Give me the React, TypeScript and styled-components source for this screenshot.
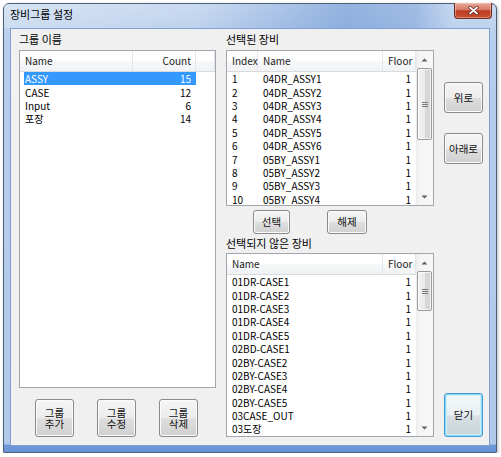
import React from 'react'
import styled, { createGlobalStyle } from 'styled-components'

const FONT = `"Noto Sans CJK KR", "Liberation Sans", sans-serif`

const GlobalStyle = createGlobalStyle`
  html, body {
    margin: 0;
    padding: 0;
    background: #fff;
  }
  body {
    font-family: ${FONT};
    font-size: 10px;
    color: #000;
  }
`

const Frame = styled.div`
  margin: 3px 0 0 3px;
  width: 494px;
  height: 450px;
  box-sizing: border-box;
  border: 1px solid #4f6079;
  border-radius: 6px 6px 1px 1px;
  padding: 0 6px 6px 6px;
  display: flex;
  flex-direction: column;
  background: linear-gradient(180deg, #c9daf0 0, #b7cdeb 40px, #b1c9e9 calc(100% - 8px), #6f99d8 calc(100% - 7px), #6892d4 100%);
  box-shadow: 1px 1px 3px rgba(0, 0, 0, 0.3);
`

const TitleBar = styled.div`
  height: 24px;
  margin: 0 -2px 0 -6px;
  padding-left: 6px;
  display: flex;
  align-items: flex-start;
  justify-content: space-between;
  background: linear-gradient(98deg, rgba(255, 255, 255, 0.25) 0%, transparent 40%, rgba(70, 120, 200, 0.4) 70%, rgba(70, 120, 200, 0.3) 84%, transparent 92%);
`

const Title = styled.span`
  font-size: 11px;
  line-height: 20px;
  color: #000;
`

const CloseButton = styled.div`
  width: 38px;
  height: 16px;
  margin-top: -1px;
  box-sizing: border-box;
  border: 1px solid #6b2b22;
  border-top: none;
  border-radius: 0 0 4px 4px;
  display: flex;
  align-items: center;
  justify-content: center;
  background: linear-gradient(180deg, #e8a89a 0%, #d67866 45%, #bd3b24 52%, #c8512f 100%);
  box-shadow: inset 0 0 0 1px rgba(255, 210, 200, 0.45);
`

const Client = styled.div`
  flex: 1;
  box-sizing: border-box;
  border: 1px solid #7c9fd4;
  background: #f0f0f0;
  padding: 0 7px 8px 8px;
  display: flex;
  gap: 10px;
`

const Column = styled.div<{ $w: number }>`
  width: ${p => p.$w}px;
  flex: none;
  display: flex;
  flex-direction: column;
`

const Label = styled.div<{ $h: number }>`
  height: ${p => p.$h}px;
  line-height: ${p => p.$h}px;
  font-size: 11px;
  white-space: nowrap;
`

const ListBox = styled.div<{ $h: number }>`
  height: ${p => p.$h}px;
  flex: none;
  box-sizing: border-box;
  border: 1px solid #a3a6ad;
  background: #fff;
  display: flex;
  overflow: hidden;
`

const ListBody = styled.div`
  flex: 1;
  min-width: 0;
  overflow: hidden;
`

const Header = styled.div`
  height: 21px;
  box-sizing: border-box;
  display: flex;
  border-bottom: 1px solid #d8dade;
  background: linear-gradient(180deg, #ffffff 0%, #ffffff 45%, #f6f7f8 55%, #f1f2f4 100%);
`

const HeadCell = styled.div<{ $w?: number; $right?: boolean }>`
  ${p => (p.$w ? `width: ${p.$w}px; flex: none;` : 'flex: 1;')}
  box-sizing: border-box;
  border-right: 1px solid #e2e5ea;
  padding: 0 4px 0 5px;
  line-height: 20px;
  text-align: ${p => (p.$right ? 'right' : 'left')};
  color: #1c1c1c;
  white-space: nowrap;
`

const Row = styled.div<{ $w: number; $sel?: boolean }>`
  width: ${p => p.$w}px;
  height: 13.4px;
  margin-left: 4px;
  display: flex;
  align-items: center;
  background: ${p => (p.$sel ? '#3399ff' : 'transparent')};
  color: ${p => (p.$sel ? '#fff' : '#000')};
`

const Cell = styled.div<{ $w: number; $right?: boolean; $first?: boolean }>`
  width: ${p => p.$w}px;
  flex: none;
  box-sizing: border-box;
  padding: ${p => (p.$first ? '0 0 0 1px' : p.$right ? '0 5px 0 0' : '0 0 0 5px')};
  text-align: ${p => (p.$right ? 'right' : 'left')};
  line-height: 13px;
  white-space: nowrap;
  overflow: hidden;
`

const ScrollBar = styled.div`
  width: 17px;
  flex: none;
  display: flex;
  flex-direction: column;
  background: linear-gradient(90deg, #ebebeb 0, #f4f4f4 3px, #f7f7f7 100%);
`

const ArrowButton = styled.div<{ $bottom?: boolean }>`
  height: 17px;
  flex: none;
  display: flex;
  align-items: center;
  justify-content: center;
  ${p => (p.$bottom ? 'margin-top: auto;' : '')}
`

const Thumb = styled.div<{ $h: number }>`
  height: ${p => p.$h}px;
  margin: 0 1px;
  flex: none;
  box-sizing: border-box;
  border: 1px solid #9b9b9b;
  border-radius: 2px;
  display: flex;
  align-items: center;
  justify-content: center;
  background: linear-gradient(90deg, #f3f3f3 0%, #e9e9e9 50%, #d9d9d9 51%, #d4d4d4 100%);
  box-shadow: inset 0 0 0 1px rgba(255, 255, 255, 0.7);
`

const Grip = styled.div`
  width: 6px;
  height: 5px;
  background: repeating-linear-gradient(180deg, #7a7a7a 0, #7a7a7a 1px, transparent 1px, transparent 2px);
`

const Button = styled.div<{ $w: number; $h: number; $default?: boolean }>`
  width: ${p => p.$w}px;
  height: ${p => p.$h}px;
  flex: none;
  box-sizing: border-box;
  border: 1px solid ${p => (p.$default ? '#3c9ad6' : '#8a8a8a')};
  border-radius: 3px;
  display: flex;
  flex-direction: column;
  align-items: center;
  justify-content: center;
  font-size: 10.5px;
  line-height: 11.5px;
  color: #111;
  background: ${p =>
    p.$default
      ? 'linear-gradient(180deg, #f4f9fc 0%, #e8eef2 50%, #d8e0e5 52%, #c9d3d9 100%)'
      : 'linear-gradient(180deg, #f5f5f5 0%, #ececec 50%, #dedede 52%, #d0d0d0 100%)'};
  box-shadow: ${p => (p.$default ? 'inset 0 0 0 1px #8fdaf8, inset 0 0 0 2px #c8eefc' : 'inset 0 0 0 1px #fbfbfb')};
`

const GroupButtons = styled.div`
  margin-top: 11px;
  padding-left: 16px;
  display: flex;
  gap: 23px;
`

const PickButtons = styled.div`
  margin-top: 4px;
  padding-left: 27px;
  display: flex;
  gap: 37px;
`

const SideButtons = styled.div`
  flex: 1;
  padding-top: 53px;
  display: flex;
  flex-direction: column;
  gap: 20px;
`

const Push = styled.div`
  margin-top: auto;
`

type Col = { label: string; width: number; right?: boolean }

type ListProps = {
  cols: Col[]
  rows: string[][]
  height: number
  selected?: number
  filler?: boolean
  thumb?: number
}

const UpArrow = () => (
  <svg width="7" height="4" viewBox="0 0 7 4">
    <path d="M0.5 3.5 L3.5 0.5 L6.5 3.5 Z" fill="#5f5f5f" />
  </svg>
)

const DownArrow = () => (
  <svg width="7" height="4" viewBox="0 0 7 4">
    <path d="M0.5 0.5 L3.5 3.5 L6.5 0.5 Z" fill="#5f5f5f" />
  </svg>
)

const ListView = ({ cols, rows, height, selected, filler, thumb }: ListProps) => {
  const rowWidth = cols.reduce((s, c) => s + c.width, 0) - 4
  return (
    <ListBox $h={height}>
      <ListBody>
        <Header>
          {cols.map(c => (
            <HeadCell key={c.label} $w={c.width} $right={c.right}>
              {c.label}
            </HeadCell>
          ))}
          {filler && <HeadCell />}
        </Header>
        {rows.map((r, i) => (
          <Row key={i} $w={rowWidth} $sel={i === selected}>
            {r.map((v, j) => (
              <Cell key={j} $w={j === 0 ? cols[j].width - 4 : cols[j].width} $first={j === 0} $right={cols[j].right}>
                {v}
              </Cell>
            ))}
          </Row>
        ))}
      </ListBody>
      {thumb && (
        <ScrollBar>
          <ArrowButton>
            <UpArrow />
          </ArrowButton>
          <Thumb $h={thumb}>
            <Grip />
          </Thumb>
          <ArrowButton $bottom>
            <DownArrow />
          </ArrowButton>
        </ScrollBar>
      )}
    </ListBox>
  )
}

const groups = [
  ['ASSY', '15'],
  ['CASE', '12'],
  ['Input', '6'],
  ['포장', '14'],
]

const selectedItems = [
  '04DR_ASSY1',
  '04DR_ASSY2',
  '04DR_ASSY3',
  '04DR_ASSY4',
  '04DR_ASSY5',
  '04DR_ASSY6',
  '05BY_ASSY1',
  '05BY_ASSY2',
  '05BY_ASSY3',
  '05BY_ASSY4',
].map((n, i) => [String(i + 1), n, '1'])

const otherItems = [
  '01DR-CASE1',
  '01DR-CASE2',
  '01DR-CASE3',
  '01DR-CASE4',
  '01DR-CASE5',
  '02BD-CASE1',
  '02BY-CASE2',
  '02BY-CASE3',
  '02BY-CASE4',
  '02BY-CASE5',
  '03CASE_OUT',
  '03도장',
].map(n => [n, '1'])

const App = () => {
  return (
    <>
      <GlobalStyle />
      <Frame>
        <TitleBar>
          <Title>장비그룹 설정</Title>
          <CloseButton>
            <svg width="11" height="9" viewBox="0 0 11 9">
              <path d="M2 1.5 L9 7.5 M9 1.5 L2 7.5" stroke="#5a1c14" strokeWidth="3.2" strokeLinecap="round" />
              <path d="M2 1.5 L9 7.5 M9 1.5 L2 7.5" stroke="#ffffff" strokeWidth="1.8" strokeLinecap="round" />
            </svg>
          </CloseButton>
        </TitleBar>
        <Client>
          <Column $w={197}>
            <Label $h={21}>그룹 이름</Label>
            <ListView
              height={338}
              filler
              selected={0}
              cols={[
                { label: 'Name', width: 113 },
                { label: 'Count', width: 63, right: true },
              ]}
              rows={groups}
            />
            <GroupButtons>
              <Button $w={39} $h={38}>
                <span>그룹</span>
                <span>추가</span>
              </Button>
              <Button $w={39} $h={38}>
                <span>그룹</span>
                <span>수정</span>
              </Button>
              <Button $w={39} $h={38}>
                <span>그룹</span>
                <span>삭제</span>
              </Button>
            </GroupButtons>
          </Column>

          <Column $w={208}>
            <Label $h={21}>선택된 장비</Label>
            <ListView
              height={156}
              thumb={72}
              cols={[
                { label: 'Index', width: 31 },
                { label: 'Name', width: 125 },
                { label: 'Floor', width: 33, right: true },
              ]}
              rows={selectedItems}
            />
            <PickButtons>
              <Button $w={37} $h={24}>선택</Button>
              <Button $w={40} $h={24}>해제</Button>
            </PickButtons>
            <Label $h={19}>선택되지 않은 장비</Label>
            <ListView
              height={184}
              thumb={40}
              cols={[
                { label: 'Name', width: 156 },
                { label: 'Floor', width: 33, right: true },
              ]}
              rows={otherItems}
            />
          </Column>

          <Column $w={39}>
            <SideButtons>
              <Button $w={39} $h={31}>위로</Button>
              <Button $w={39} $h={31}>아래로</Button>
              <Push>
                <Button $w={39} $h={44} $default>닫기</Button>
              </Push>
            </SideButtons>
          </Column>
        </Client>
      </Frame>
    </>
  )
}

export default App
